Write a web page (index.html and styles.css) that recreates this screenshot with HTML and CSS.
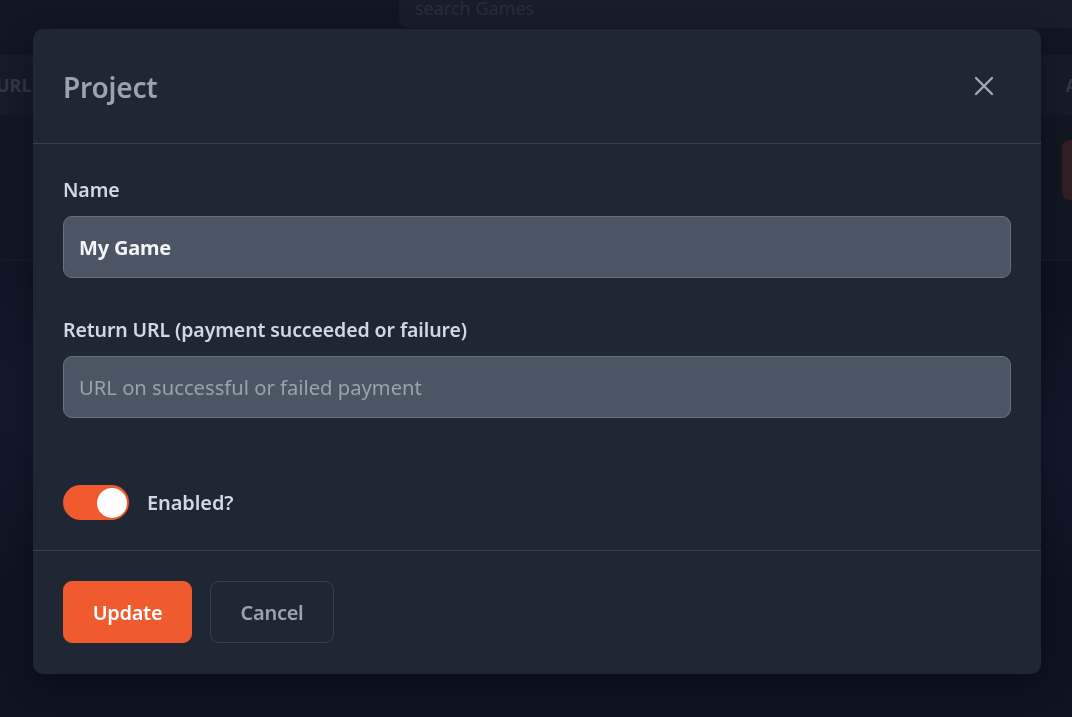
FILE: index.html
```html
<!DOCTYPE html>
<html lang="en">
<head>
<meta charset="utf-8">
<title>Project</title>
<link rel="stylesheet" href="styles.css">
</head>
<body>
<div class="page">
  <div class="topbar">
    <div class="search">search Games</div>
  </div>
  <div class="thead">
    <span class="th-left">URL</span>
    <span class="th-right">A</span>
  </div>
  <div class="trow">
    <span class="row-btn"></span>
  </div>
  <div class="hero"></div>
</div>

<div class="overlay"></div>

<div class="modal" role="dialog">
  <div class="modal-header">
    <h2 class="modal-title">Project</h2>
    <button class="close-btn" aria-label="Close">
      <svg width="20" height="20" viewBox="0 0 20 20" fill="none" stroke="currentColor" stroke-width="2.4" stroke-linecap="round">
        <path d="M2 2 L18 18 M18 2 L2 18"/>
      </svg>
    </button>
  </div>
  <div class="modal-body">
    <label class="field-label">Name</label>
    <div class="input filled">My Game</div>
    <label class="field-label second">Return URL (payment succeeded or failure)</label>
    <div class="input placeholder">URL on successful or failed payment</div>
    <div class="toggle-row">
      <span class="toggle"><span class="knob"></span></span>
      <span class="toggle-label">Enabled?</span>
    </div>
  </div>
  <div class="modal-footer">
    <button class="btn btn-primary">Update</button>
    <button class="btn btn-secondary">Cancel</button>
  </div>
</div>
</body>
</html>
```

FILE: styles.css
```css
html, body {
  margin: 0;
  padding: 0;
  height: 100%;
}
body {
  background: #131826;
  font-family: "Noto Sans", "Open Sans", sans-serif;
  overflow: hidden;
}
.page {
  display: flex;
  flex-direction: column;
  height: 100%;
}
.topbar {
  height: 55px;
  background: #141a26;
  display: flex;
  justify-content: flex-end;
}
.search {
  width: 673px;
  height: 28px;
  background: #1d2230;
  border-bottom-left-radius: 8px;
  color: #2f3546;
  font-size: 18px;
  line-height: 16px;
  padding-left: 16px;
  box-sizing: border-box;
  overflow: hidden;
}
.thead {
  height: 60px;
  background: #1a202c;
  display: flex;
  align-items: center;
  justify-content: space-between;
  color: #3a404e;
  font-weight: 700;
  font-size: 18px;
}
.th-left { margin-left: -4px; }
.th-right { margin-right: -6px; }
.trow {
  height: 145px;
  background: #151b27;
  border-bottom: 1px solid #1b2231;
  display: flex;
  justify-content: flex-end;
  align-items: flex-start;
}
.row-btn {
  width: 40px;
  height: 60px;
  margin-top: 25px;
  margin-right: -30px;
  background: #3d2229;
  border-radius: 8px;
}
.hero {
  flex: 1;
  background:
    radial-gradient(ellipse at 5% 30%, #181d35 0%, rgba(24,29,53,0) 40%),
    radial-gradient(ellipse at 98% 40%, #171b32 0%, rgba(23,27,50,0) 35%),
    #121726;
}
.overlay {
  position: fixed;
  inset: 0;
  background: rgba(8, 10, 16, 0.15);
}

.modal {
  position: fixed;
  left: 33px;
  top: 29px;
  width: 1008px;
  background: #1f2735;
  border-radius: 10px;
  box-shadow: 0 10px 30px rgba(0,0,0,0.35);
}
.modal-header {
  height: 114px;
  padding: 0 30px;
  border-bottom: 1px solid #384150;
  display: flex;
  align-items: center;
  justify-content: space-between;
}
.modal-title {
  margin: 0;
  font-size: 28px;
  font-weight: 600;
  color: #9aa3b1;
  letter-spacing: -0.2px;
  position: relative;
  top: 1px;
}
.close-btn {
  background: none;
  border: 0;
  padding: 0;
  margin-right: 17px;
  color: #a0a8b5;
  display: flex;
  cursor: pointer;
}
.modal-body {
  padding: 33px 30px 30px;
  display: flex;
  flex-direction: column;
}
.field-label {
  font-size: 19.5px;
  line-height: 26px;
  font-weight: 600;
  color: #d3d8df;
  margin-bottom: 13px;
  letter-spacing: -0.1px;
}
.field-label.second {
  margin-top: 39px;
  margin-bottom: 13px;
}
.input {
  height: 60px;
  background: #4b5563;
  border: 1px solid #687282;
  border-radius: 9px;
  padding: 0 15px;
  display: flex;
  align-items: center;
  font-size: 20px;
}
.input.filled {
  color: #f3f4f6;
  font-weight: 700;
  letter-spacing: -0.2px;
}
.input.placeholder {
  color: #9aa2ae;
  font-weight: 400;
  font-size: 20.2px;
}
.toggle-row {
  margin-top: 67px;
  display: flex;
  align-items: center;
  gap: 18px;
}
.toggle {
  width: 66px;
  height: 35px;
  border-radius: 18px;
  background: #f05a2e;
  display: flex;
  align-items: center;
  justify-content: flex-end;
  padding: 0 2px;
  box-sizing: border-box;
}
.knob {
  width: 30px;
  height: 30px;
  border-radius: 50%;
  background: #ffffff;
}
.toggle-label {
  font-size: 20px;
  font-weight: 600;
  color: #d3d8df;
  letter-spacing: -0.1px;
}
.modal-footer {
  border-top: 1px solid #384150;
  padding: 30px 30px 31px;
  display: flex;
  align-items: center;
  gap: 18px;
}
.btn {
  height: 62px;
  border-radius: 9px;
  font-family: inherit;
  font-size: 20px;
  font-weight: 600;
  letter-spacing: -0.3px;
  cursor: pointer;
}
.btn-primary {
  width: 129px;
  background: #f05a2f;
  border: 1px solid #f05a2f;
  color: #ffffff;
}
.btn-secondary {
  width: 124px;
  background: transparent;
  border: 1px solid #394252;
  color: #9aa3b1;
}
```
